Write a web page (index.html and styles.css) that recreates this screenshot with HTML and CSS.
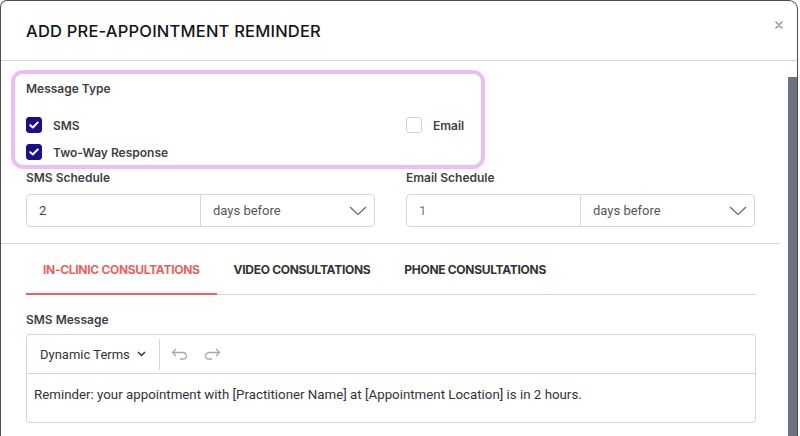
FILE: index.html
```html
<!DOCTYPE html>
<html>
<head>
<meta charset="utf-8">
<link rel="stylesheet" href="styles.css">
</head>
<body>
<div class="modal">
  <div class="header">
    <h1 class="title">ADD PRE-APPOINTMENT REMINDER</h1>
    <svg class="close" width="8" height="8" viewBox="0 0 8 8"><path d="M1 1L7 7M7 1L1 7" stroke="#9a9a9a" stroke-width="1.6" stroke-linecap="round"/></svg>
  </div>
  <div class="main">
    <div class="content">
      <div class="highlight"></div>
      <div class="section">
        <div class="label">Message Type</div>
        <div class="grid types">
          <div class="col">
            <label class="check"><span class="box on"><svg width="10" height="8" viewBox="0 0 10 8"><path d="M1.3 4.2L3.8 6.5L8.7 1.5" fill="none" stroke="#fff" stroke-width="2" stroke-linecap="round" stroke-linejoin="round"/></svg></span><span>SMS</span></label>
            <label class="check"><span class="box on"><svg width="10" height="8" viewBox="0 0 10 8"><path d="M1.3 4.2L3.8 6.5L8.7 1.5" fill="none" stroke="#fff" stroke-width="2" stroke-linecap="round" stroke-linejoin="round"/></svg></span><span>Two-Way Response</span></label>
          </div>
          <div class="col">
            <label class="check"><span class="box"></span><span>Email</span></label>
          </div>
        </div>
        <div class="grid schedules">
          <div class="field">
            <div class="label">SMS Schedule</div>
            <div class="group">
              <div class="num">2</div>
              <div class="select"><span>days before</span><svg width="18" height="10" viewBox="0 0 18 10"><path d="M1 1L9 8.5L17 1" fill="none" stroke="#666" stroke-width="1.2"/></svg></div>
            </div>
          </div>
          <div class="field">
            <div class="label">Email Schedule</div>
            <div class="group">
              <div class="num light">1</div>
              <div class="select"><span>days before</span><svg width="18" height="10" viewBox="0 0 18 10"><path d="M1 1L9 8.5L17 1" fill="none" stroke="#666" stroke-width="1.2"/></svg></div>
            </div>
          </div>
        </div>
      </div>
      <div class="divider"></div>
      <div class="section lower">
        <div class="tabs">
          <div class="tab active">IN-CLINIC CONSULTATIONS</div>
          <div class="tab">VIDEO CONSULTATIONS</div>
          <div class="tab">PHONE CONSULTATIONS</div>
        </div>
        <div class="label msg-label">SMS Message</div>
        <div class="editor">
          <div class="toolbar">
            <div class="terms"><span>Dynamic Terms</span><svg width="9" height="6" viewBox="0 0 9 6"><path d="M1 1L4.5 4.5L8 1" fill="none" stroke="#333" stroke-width="1.5"/></svg></div>
            <div class="sep"></div>
            <svg class="hist" width="17" height="12" viewBox="0 0 17 12"><path d="M5 1L1.5 4.5L5 8M1.8 4.5H11.5C14 4.5 15.5 6 15.5 8C15.5 10 14 11 12 11H9" fill="none" stroke="#aaa" stroke-width="1.3" stroke-linejoin="round"/></svg>
            <svg class="hist" width="17" height="12" viewBox="0 0 17 12"><path d="M12 1L15.5 4.5L12 8M15.2 4.5H5.5C3 4.5 1.5 6 1.5 8C1.5 10 3 11 5 11H8" fill="none" stroke="#aaa" stroke-width="1.3" stroke-linejoin="round"/></svg>
          </div>
          <div class="text">Reminder: your appointment with [Practitioner Name] at [Appointment Location] is in 2 hours.</div>
        </div>
      </div>
    </div>
    <div class="scroll"><div class="thumb"></div></div>
  </div>
</div>
</body>
</html>
```
FILE: styles.css
```css
* { box-sizing: border-box; }
html, body { margin: 0; padding: 0; background: #fff; }
body { font-family: Inter, "Noto Sans", sans-serif; color: #333; }
.modal {
  width: 798px;
  height: 436px;
  border: 1px solid #4d4d4d;
  border-bottom: none;
  border-radius: 7px 9px 0 0;
  overflow: hidden;
  background: #fff;
}
.header {
  height: 60px;
  border-bottom: 1px solid #d4d6da;
  display: flex;
  align-items: center;
  justify-content: space-between;
  padding: 0 14px 0 25px;
}
.title {
  margin: 0;
  font-size: 16.5px;
  font-weight: 500;
  color: #141414;
  letter-spacing: 0.2px;
}
.close { margin-top: -12px; }
.main { display: flex; }
.content { width: 779px; position: relative; }
.scroll { width: 17px; padding: 16px 0 0 8px; }
.thumb { width: 9px; height: 400px; background: #6c737c; }
.highlight {
  position: absolute;
  left: 10px;
  top: 9px;
  width: 474px;
  height: 99px;
  border: 4px solid #ecbdf6;
  border-radius: 12px;
  pointer-events: none;
}
.section { padding: 20px 24px 0 25px; }
.label {
  font-size: 12px;
  line-height: 16px;
  font-weight: 600;
  color: #3f3f46;
}
.grid {
  display: grid;
  grid-template-columns: 349px 349px;
  column-gap: 31px;
}
.types { margin-top: 20px; }
.col { display: flex; flex-direction: column; gap: 11px; }
.check {
  display: flex;
  align-items: center;
  gap: 11px;
  height: 16px;
  font-size: 12px;
  font-weight: 600;
  color: #3f3f46;
}
.box {
  width: 16px;
  height: 16px;
  border-radius: 3px;
  border: 1px solid #cfd3d9;
  background: #fff;
  display: flex;
  align-items: center;
  justify-content: center;
}
.box.on { background: #1b0d8c; border-color: #1b0d8c; }
.schedules { margin-top: 10px; }
.field .label { margin-bottom: 8px; }
.group {
  display: flex;
  height: 33px;
  border: 1px solid #d4d6da;
  border-radius: 4px;
  font-family: Roboto, "Liberation Sans", sans-serif;
  font-size: 13px;
}
.num {
  width: 174px;
  padding-left: 12px;
  display: flex;
  align-items: center;
  color: #444;
  border-right: 1px solid #d4d6da;
}
.num.light { color: #777; }
.select {
  flex: 1;
  display: flex;
  align-items: center;
  justify-content: space-between;
  padding: 0 7px 0 12px;
  color: #555;
}
.divider { height: 1px; background: #d4d6da; margin-top: 16px; }
.lower { padding-top: 2px; }
.tabs { display: flex; border-bottom: 1px solid #d4d6da; }
.tab {
  padding: 16px 17px 15px;
  font-size: 12px;
  line-height: 16px;
  font-weight: 700;
  color: #333;
  border-bottom: 2px solid transparent;
  margin-bottom: -1px;
  letter-spacing: -0.3px;
}
.tab.active { color: #ea625b; border-bottom-color: #ea625b; }
.msg-label { margin-top: 17px; margin-bottom: 6px; }
.editor {
  border: 1px solid #d4d6da;
  border-radius: 3px;
  font-family: Roboto, "Liberation Sans", sans-serif;
  font-size: 13px;
  color: #333;
}
.toolbar {
  height: 39px;
  border-bottom: 1px solid #d4d6da;
  display: flex;
  align-items: center;
  padding-left: 13px;
}
.terms { display: flex; align-items: center; gap: 7px; }
.sep { width: 1px; height: 31px; background: #d4d6da; margin: 0 11px 0 13px; }
.hist { margin-right: 16px; }
.text { padding: 13px 7px 0; height: 48px; line-height: 16px; font-size: 13.3px; }
```
